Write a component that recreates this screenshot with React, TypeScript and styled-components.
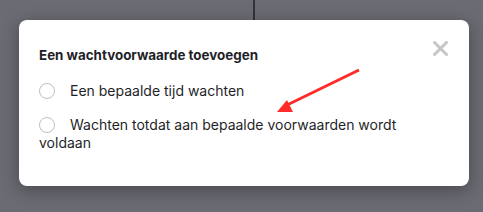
import React, { useState } from 'react';
import styled, { createGlobalStyle } from 'styled-components';

const GlobalStyle = createGlobalStyle`
  html, body {
    margin: 0;
    padding: 0;
    background: #6b6b73;
  }
  body {
    font-family: Inter, "Noto Sans", sans-serif;
    color: #1f1f29;
  }
`;

const Page = styled.div`
  width: 483px;
  height: 212px;
  display: flex;
  flex-direction: column;
  padding-left: 19px;
  box-sizing: border-box;
  overflow: hidden;
`;

const Connector = styled.div`
  width: 2px;
  height: 20px;
  margin-left: 234px;
  background: #33333d;
`;

const Modal = styled.section`
  position: relative;
  width: 450px;
  height: 166px;
  box-sizing: border-box;
  padding: 25px 20px 22px;
  background: #ffffff;
  border-radius: 8px;
  box-shadow: 0 4px 18px rgba(0, 0, 0, 0.35);
`;

const Title = styled.h2`
  margin: 0 0 17px;
  font-size: 13.4px;
  line-height: 20px;
  font-weight: 700;
`;

const CloseButton = styled.button`
  position: absolute;
  top: 21px;
  right: 21px;
  width: 15px;
  height: 15px;
  padding: 0;
  border: 0;
  background: none;
  cursor: pointer;
  display: flex;
`;

const Options = styled.div`
  display: flex;
  flex-direction: column;
  gap: 16px;
`;

const Option = styled.label`
  display: block;
  font-size: 14px;
  line-height: 18px;
  cursor: pointer;
`;

const RadioCircle = styled.span<{ $checked: boolean }>`
  display: inline-block;
  box-sizing: border-box;
  width: 16px;
  height: 16px;
  margin-right: 15px;
  vertical-align: -3px;
  border-radius: 50%;
  border: 1.5px solid #bfbfc4;
  background: ${(p) => (p.$checked ? '#8b3dff' : '#fff')};
`;

const HiddenInput = styled.input`
  display: none;
`;

const Arrow = styled.svg`
  position: absolute;
  left: 0;
  top: 0;
  pointer-events: none;
`;

const options = [
  'Een bepaalde tijd wachten',
  'Wachten totdat aan bepaalde voorwaarden wordt voldaan',
];

export default function App() {
  const [selected, setSelected] = useState<number | null>(null);

  return (
    <>
      <GlobalStyle />
      <Page>
        <Connector />
        <Modal>
          <Title>Een wachtvoorwaarde toevoegen</Title>
          <CloseButton aria-label="Sluiten">
            <svg width="15" height="15" viewBox="0 0 15 15">
              <path d="M1.5 1.5l12 12M13.5 1.5l-12 12" stroke="#c6c6c9" strokeWidth="3" strokeLinecap="round" />
            </svg>
          </CloseButton>
          <Options>
            {options.map((text, i) => (
              <Option key={text}>
                <HiddenInput type="radio" name="wait" checked={selected === i} onChange={() => setSelected(i)} />
                <RadioCircle $checked={selected === i} />
                {text}
              </Option>
            ))}
          </Options>
          <Arrow width="450" height="166" viewBox="0 0 450 166">
            <line x1="340" y1="50" x2="266" y2="86" stroke="#ff2b2b" strokeWidth="3" />
            <polygon points="258,92 268,80 274,92" fill="#ff2b2b" />
          </Arrow>
        </Modal>
      </Page>
    </>
  );
}
